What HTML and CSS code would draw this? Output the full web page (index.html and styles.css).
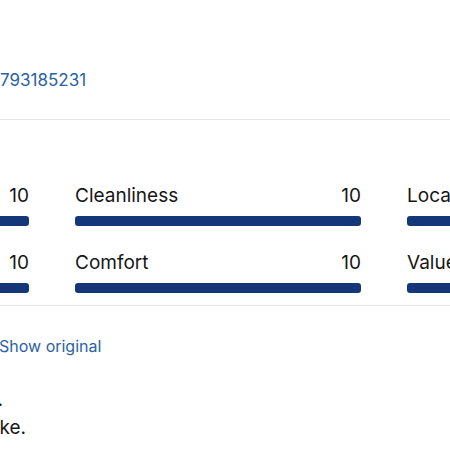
FILE: index.html
```html
<!DOCTYPE html>
<html lang="en">
<head>
    <meta charset="UTF-8">
    <meta name="viewport" content="width=device-width, initial-scale=1.0">
    <title>Guest review</title>
    <link rel="stylesheet" href="styles.css">
</head>
<body>
    <div class="review-page">
        <div class="booking-ref">
            <a href="#" class="ref-link">793185231</a>
        </div>

        <div class="scores">
            <div class="score-grid">
                <div class="score-item">
                    <div class="score-head"><span>Staff</span><span>10</span></div>
                    <div class="bar-track"><div class="bar-fill" style="width: 100%"></div></div>
                </div>
                <div class="score-item">
                    <div class="score-head"><span>Cleanliness</span><span>10</span></div>
                    <div class="bar-track"><div class="bar-fill" style="width: 100%"></div></div>
                </div>
                <div class="score-item">
                    <div class="score-head"><span>Location</span><span>10</span></div>
                    <div class="bar-track"><div class="bar-fill" style="width: 100%"></div></div>
                </div>
                <div class="score-item">
                    <div class="score-head"><span>Facilities</span><span>10</span></div>
                    <div class="bar-track"><div class="bar-fill" style="width: 100%"></div></div>
                </div>
                <div class="score-item">
                    <div class="score-head"><span>Comfort</span><span>10</span></div>
                    <div class="bar-track"><div class="bar-fill" style="width: 100%"></div></div>
                </div>
                <div class="score-item">
                    <div class="score-head"><span>Value for money</span><span>10</span></div>
                    <div class="bar-track"><div class="bar-fill" style="width: 100%"></div></div>
                </div>
            </div>
        </div>

        <div class="translate">
            <a href="#" class="show-original">Show original</a>
        </div>

        <div class="review-text">
            <p class="line-short">We really enjoyed our stay here.</p>
            <p>Lovely quiet place right by the lake.</p>
        </div>
    </div>
</body>
</html>
```

FILE: styles.css
```css
body {
    margin: 0;
    background-color: #fff;
    color: #161616;
    font-family: Inter, "Noto Sans", sans-serif;
    overflow: hidden;
}

.review-page {
    width: 450px;
    height: 450px;
    overflow: hidden;
}

.booking-ref {
    padding: 70px 0 29px;
    font-size: 17px;
    line-height: 20px;
}

.ref-link,
.show-original {
    color: #2a63a3;
    text-decoration: none;
}

.scores {
    border-top: 1px solid #e6e6e6;
    border-bottom: 1px solid #e6e6e6;
    padding: 64px 0 12px;
}

.score-grid {
    display: grid;
    grid-template-columns: repeat(3, 286px);
    column-gap: 46px;
    row-gap: 25px;
    width: max-content;
    margin-left: -257px; /* first column is cut off by the crop */
}

.score-head {
    display: flex;
    justify-content: space-between;
    font-size: 19px;
    line-height: 24px;
}

.bar-track {
    height: 10px;
    margin-top: 8px;
    border-radius: 3px;
    background-color: #e6e6e6;
    overflow: hidden;
}

.bar-fill {
    height: 100%;
    background-color: #14377a;
}

.translate {
    margin-top: 30px;
    margin-left: -1px;
    font-size: 16px;
    line-height: 20px;
}

.review-text {
    width: 400px;
    margin: 30px 0 0 -374px;
    font-size: 19px;
    line-height: 28px;
    text-align: right;
}

.review-text p {
    margin: 0;
    white-space: nowrap;
}

.review-text .line-short {
    padding-right: 23px;
}
```
